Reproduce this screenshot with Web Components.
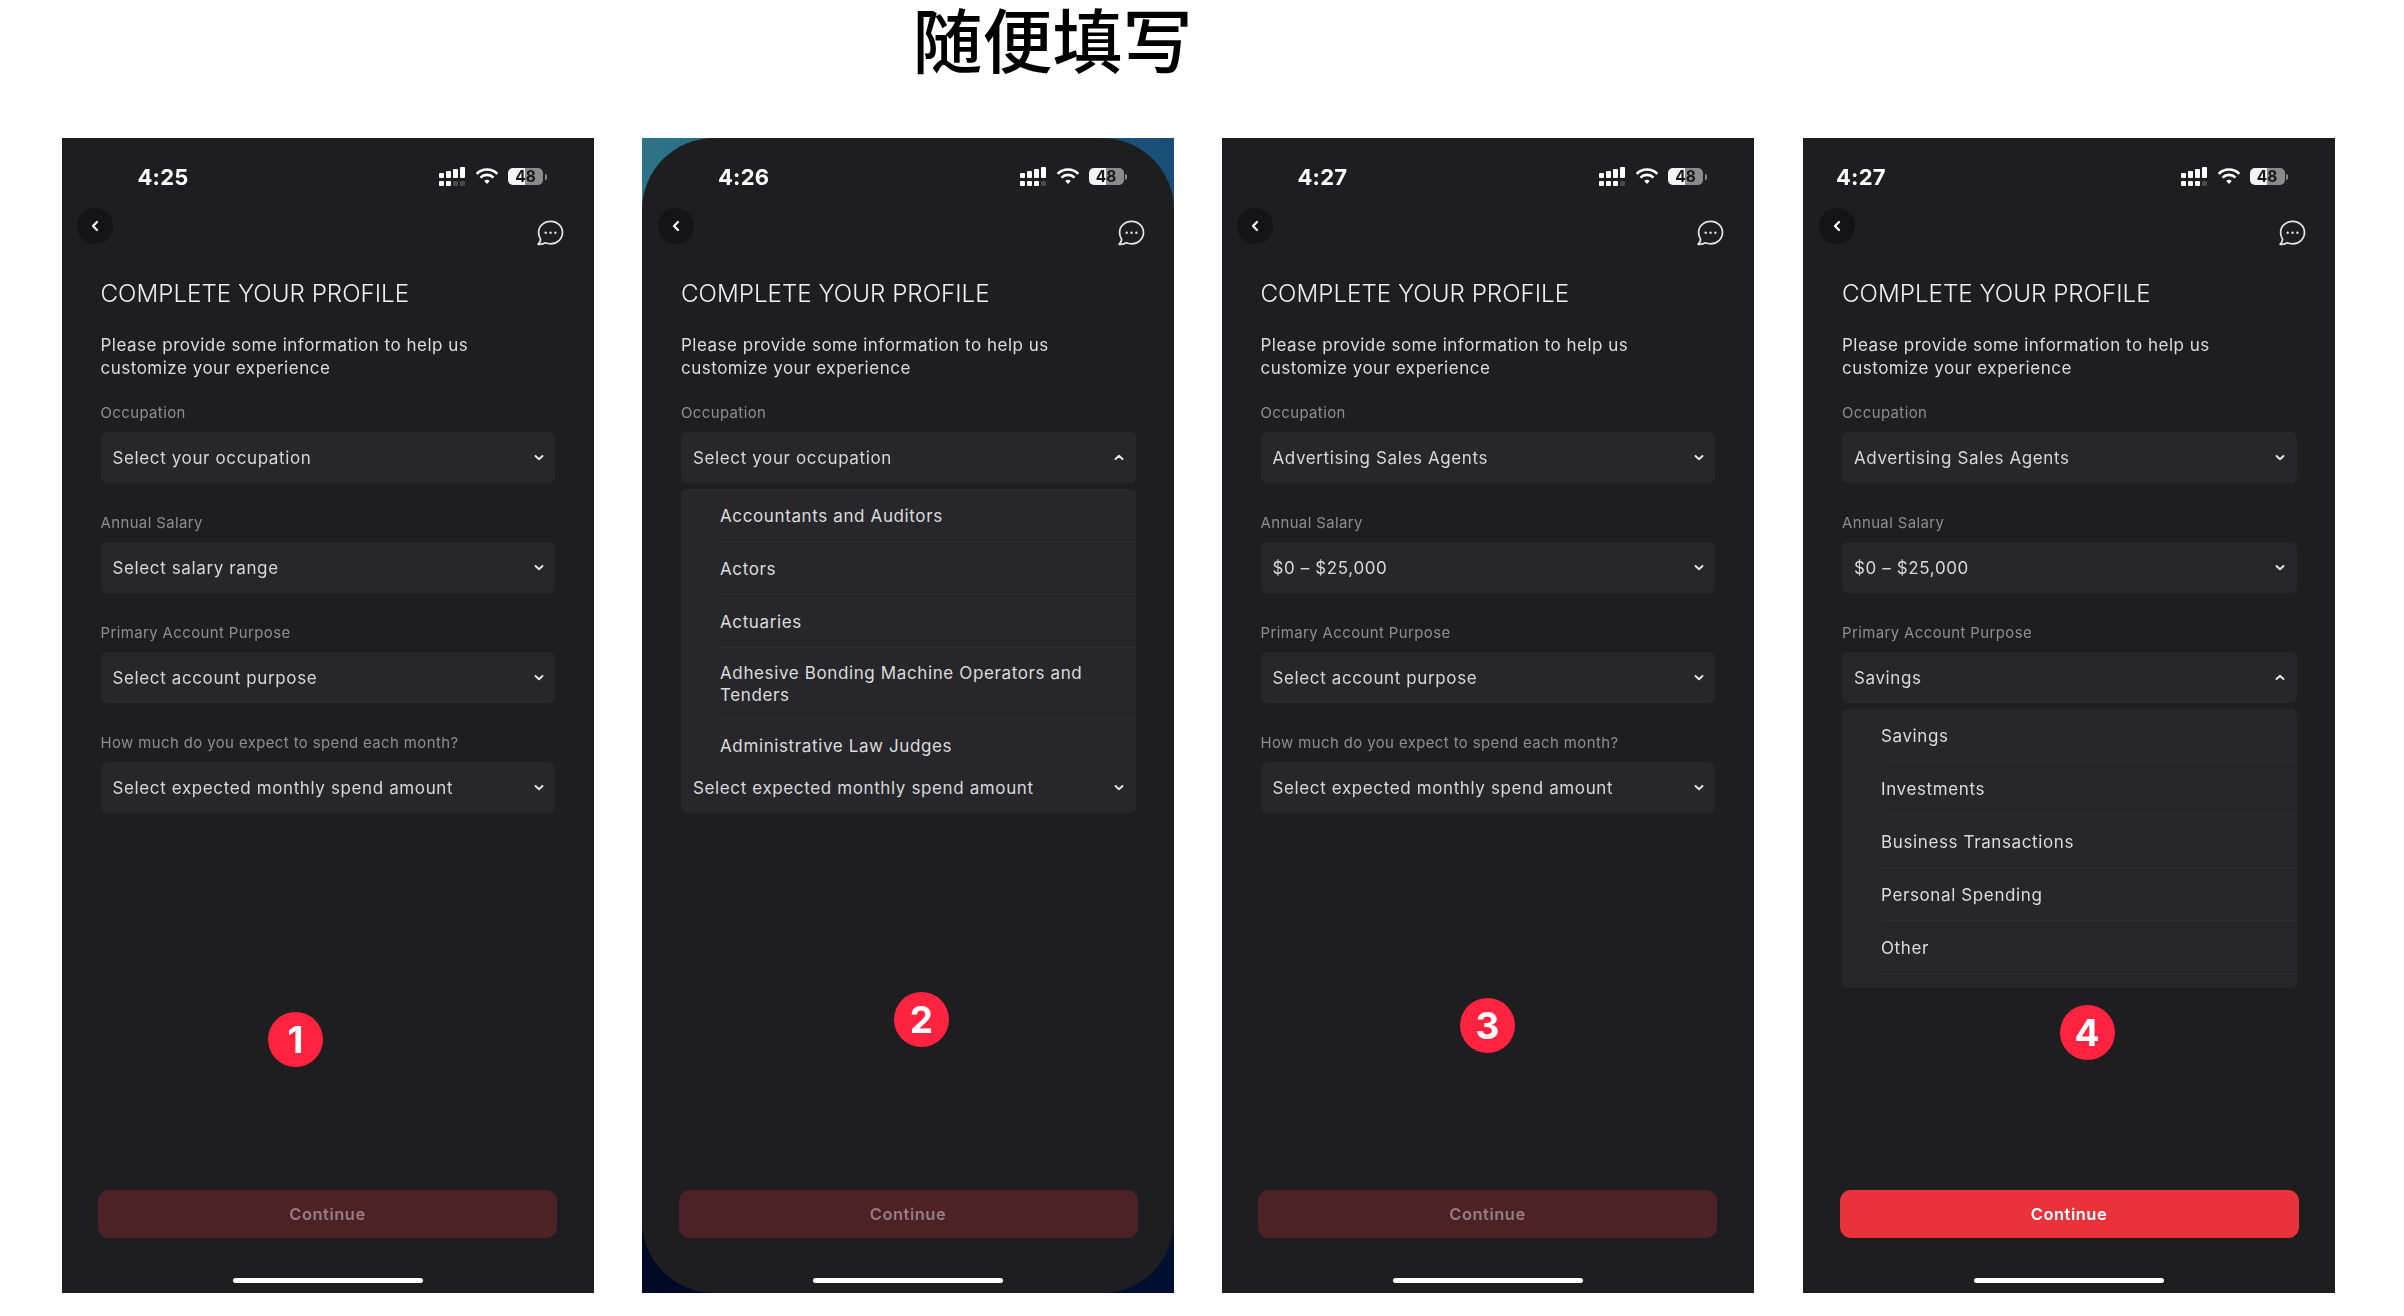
<!DOCTYPE html>
<html lang="en">
<head>
<meta charset="utf-8">
<title>Complete your profile</title>
<style>
  html, body { margin: 0; padding: 0; background: #fff; }
  body { font-family: Inter, "Noto Sans", sans-serif; }
</style>
</head>
<body>
<board-page>
  <app-phone time="4:25" signal="2">
    <select-field label="Occupation" value="Select your occupation"></select-field>
    <select-field label="Annual Salary" value="Select salary range"></select-field>
    <select-field label="Primary Account Purpose" value="Select account purpose"></select-field>
    <select-field label="How much do you expect to spend each month?" value="Select expected monthly spend amount"></select-field>
    <step-badge slot="over" style="left:206.5px;top:874px">1</step-badge>
  </app-phone>

  <app-phone time="4:26" signal="3" wallpaper>
    <select-field label="Occupation" value="Select your occupation" open>
      <drop-option>Accountants and Auditors</drop-option>
      <drop-option>Actors</drop-option>
      <drop-option>Actuaries</drop-option>
      <drop-option>Adhesive Bonding Machine Operators and Tenders</drop-option>
      <drop-option>Administrative Law Judges</drop-option>
    </select-field>
    <select-field label="Annual Salary" value="Select salary range" covered></select-field>
    <select-field label="Primary Account Purpose" value="Select account purpose" covered></select-field>
    <select-field label="How much do you expect to spend each month?" value="Select expected monthly spend amount" front></select-field>
    <step-badge slot="over" style="left:252px;top:853.5px">2</step-badge>
  </app-phone>

  <app-phone time="4:27" signal="3" style="margin:0 1px 0 -1px">
    <select-field label="Occupation" value="Advertising Sales Agents"></select-field>
    <select-field label="Annual Salary" value="$0 – $25,000"></select-field>
    <select-field label="Primary Account Purpose" value="Select account purpose"></select-field>
    <select-field label="How much do you expect to spend each month?" value="Select expected monthly spend amount"></select-field>
    <step-badge slot="over" style="left:238.5px;top:860px">3</step-badge>
  </app-phone>

  <app-phone time="4:27" signal="3" time-left="33" ready>
    <select-field label="Occupation" value="Advertising Sales Agents"></select-field>
    <select-field label="Annual Salary" value="$0 – $25,000"></select-field>
    <select-field label="Primary Account Purpose" value="Savings" open>
      <drop-option>Savings</drop-option>
      <drop-option>Investments</drop-option>
      <drop-option>Business Transactions</drop-option>
      <drop-option>Personal Spending</drop-option>
      <drop-option>Other</drop-option>
    </select-field>
    <select-field label="How much do you expect to spend each month?" value="Select expected monthly spend amount" covered></select-field>
    <step-badge slot="over" style="left:256.5px;top:867px">4</step-badge>
  </app-phone>
</board-page>

<script>
class BoardPage extends HTMLElement {
  connectedCallback() {
    this.attachShadow({ mode: 'open' });
    this.shadowRoot.innerHTML = `
      <style>
        :host { display: block; width: 2404px; height: 1316px; overflow: hidden; background: #fff; }
        header { height: 138px; padding-left: 912.5px; box-sizing: border-box; }
        h1 {
          margin: 0;
          font: 500 70px/76px "Noto Sans CJK SC", sans-serif;
          color: #000;
        }
        .phones { display: flex; gap: 48.5px; padding-left: 61.5px; }
      </style>
      <header><h1>随便填写</h1></header>
      <div class="phones"><slot></slot></div>
    `;
  }
}

class StatusBar extends HTMLElement {
  connectedCallback() {
    const time = this.getAttribute('time');
    const lit = Number(this.getAttribute('signal') || 3);
    const left = this.getAttribute('time-left') || 76;
    const dots = [0, 7, 14, 21].map((x, i) =>
      `<rect x="${x}" y="14" width="5" height="5" rx="1" fill="${i < lit ? '#fff' : '#4a4a4c'}"/>`).join('');
    this.attachShadow({ mode: 'open' });
    this.shadowRoot.innerHTML = `
      <style>
        :host {
          display: flex;
          align-items: center;
          height: 22px;
          padding: 28px 0 20px ${left}px;
          position: relative;
          color: #fff;
        }
        .time { font: 700 22px/22px Inter, sans-serif; letter-spacing: 0.2px; }
        .icons { position: absolute; left: 377.5px; top: 29px; display: flex; align-items: center; gap: 9px; }
        svg { display: block; }
        .battery { display: flex; align-items: center; gap: 1.5px; }
        .cell {
          width: 35px;
          height: 17px;
          border-radius: 5px;
          background: linear-gradient(90deg, #f4f4f4 48%, #8a8a8a 48%);
          color: #161616;
          font: 700 15.5px/17px Inter, sans-serif;
          text-align: center;
        }
        .tip { width: 2px; height: 6px; border-radius: 0 2px 2px 0; background: #8a8a8a; }
      </style>
      <span class="time">${time}</span>
      <div class="icons">
        <svg width="24" height="19" viewBox="0 0 27 19" fill="#fff" preserveAspectRatio="none" style="width:27px">
          <rect x="0" y="6" width="5" height="5" rx="1"/>
          <rect x="7" y="4" width="5" height="7" rx="1"/>
          <rect x="14" y="2" width="5" height="9" rx="1"/>
          <rect x="21" y="0" width="5" height="11" rx="1"/>
          ${dots}
        </svg>
        <svg width="24" height="17" viewBox="0 0 23 17" fill="none" stroke="#fff" stroke-width="2.6">
          <path d="M1.2 5.8a14.6 14.6 0 0 1 20.6 0"/>
          <path d="M5 9.6a9.2 9.2 0 0 1 13 0"/>
          <path d="M8.8 13.1a3.9 3.9 0 0 1 5.4 0L11.5 16z" fill="#fff" stroke="none"/>
        </svg>
        <div class="battery"><div class="cell">48</div><div class="tip"></div></div>
      </div>
    `;
  }
}

class NavBar extends HTMLElement {
  connectedCallback() {
    this.attachShadow({ mode: 'open' });
    this.shadowRoot.innerHTML = `
      <style>
        :host {
          display: flex;
          justify-content: space-between;
          align-items: flex-end;
          height: 38px;
          padding: 0 29.5px 0 15.5px;
        }
        .back {
          width: 36px;
          height: 36px;
          align-self: flex-start;
          border-radius: 50%;
          background: #141416;
          display: flex;
          align-items: center;
          justify-content: center;
        }
        svg { display: block; }
      </style>
      <div class="back">
        <svg width="8" height="12" viewBox="0 0 8 12" fill="none" stroke="#fff" stroke-width="2.2" stroke-linecap="round" stroke-linejoin="round">
          <path d="M6 2 2 6l4 4"/>
        </svg>
      </div>
      <svg width="28" height="26" viewBox="0 0 26 24" fill="none" stroke="#e4e4e4" stroke-width="1.6" stroke-linejoin="round">
        <path d="M13.6 1.2C7.2 1.2 2.4 5.8 2.4 11.6c0 2.2.6 4.2 1.8 5.9.3 1.6-.5 3.2-2.2 5 2.9.3 5.1-.3 6.6-1.4 1.5.7 3.2 1 5 1 6 0 11-4.7 11-10.5S19.8 1.2 13.6 1.2z"/>
        <g fill="#e4e4e4" stroke="none"><circle cx="9" cy="11.8" r="1.1"/><circle cx="13.5" cy="11.8" r="1.1"/><circle cx="18" cy="11.8" r="1.1"/></g>
      </svg>
    `;
  }
}

class AppPhone extends HTMLElement {
  connectedCallback() {
    const time = this.getAttribute('time');
    const signal = this.getAttribute('signal');
    const timeLeft = this.getAttribute('time-left') || '';
    this.attachShadow({ mode: 'open' });
    this.shadowRoot.innerHTML = `
      <style>
        :host {
          display: block;
          width: 532px;
          height: 1155px;
          flex: none;
          background: #1e1e20;
          color: #fff;
          font-family: Inter, "Noto Sans", sans-serif;
        }
        :host([wallpaper]) {
          background:
            linear-gradient(90deg, #2f7387, #174e78) top / 100% 50% no-repeat,
            linear-gradient(90deg, #010824, #021030) bottom / 100% 50% no-repeat;
        }
        .screen {
          position: relative;
          height: 100%;
          background: #1e1e20;
          display: flex;
          flex-direction: column;
          filter: blur(0.35px);
        }
        :host([wallpaper]) .screen { border-radius: 72px; }
        h2 {
          margin: 33px 0 0 39px;
          font: 300 24.2px/30px Inter, sans-serif;
          color: #f0f0f0;
        }
        p {
          margin: 25px 0 24px 39px;
          width: 430px;
          font: 400 17px/22.5px Inter, sans-serif;
          letter-spacing: 0.5px;
          color: #dcdcdc;
        }
        .fields { display: flex; flex-direction: column; gap: 30px; padding: 0 38.5px 0 39px; }
        .bottom { margin-top: auto; display: flex; flex-direction: column; align-items: center; }
        .home { width: 190px; height: 5px; margin: 40px 0 10px; border-radius: 3px; background: #fff; }
      </style>
      <div class="screen">
        <status-bar time="${time}" signal="${signal}" ${timeLeft ? `time-left="${timeLeft}"` : ''}></status-bar>
        <nav-bar></nav-bar>
        <h2>COMPLETE YOUR PROFILE</h2>
        <p>Please provide some information to help us customize your experience</p>
        <div class="fields"><slot></slot></div>
        <div class="bottom">
          <continue-button ${this.hasAttribute('ready') ? 'ready' : ''}>Continue</continue-button>
          <div class="home"></div>
        </div>
        <slot name="over"></slot>
      </div>
    `;
  }
}

class SelectField extends HTMLElement {
  connectedCallback() {
    const isOpen = this.hasAttribute('open');
    this.attachShadow({ mode: 'open' });
    this.shadowRoot.innerHTML = `
      <style>
        :host { display: block; position: relative; }
        :host([covered]) { visibility: hidden; }
        :host([front]) label { visibility: hidden; }
        label {
          display: block;
          margin-bottom: 9px;
          font: 400 14.9px/20px Inter, sans-serif;
          letter-spacing: 0.42px;
          color: #8e8e90;
        }
        .box {
          display: flex;
          align-items: center;
          justify-content: space-between;
          height: 51px;
          padding: 0 11.5px 0 12px;
          border-radius: 6px;
          background: #27262b;
          color: #d8d8d8;
          font: 400 17px/22px Inter, sans-serif;
          letter-spacing: 0.62px;
        }
        :host([front]) .box { position: relative; z-index: 2; }
        svg { display: block; }
        .panel {
          position: absolute;
          z-index: 1;
          left: 0;
          right: 0;
          top: 86px;
          padding-bottom: 14px;
          border-radius: 6px;
          background: #27262b;
        }
      </style>
      <label>${this.getAttribute('label')}</label>
      <div class="box">
        <span>${this.getAttribute('value')}</span>
        <svg width="10" height="7" viewBox="0 0 10 7" fill="none" stroke="#e8e8e8" stroke-width="1.9" stroke-linecap="round" stroke-linejoin="round">
          <path d="${isOpen ? 'M1.5 5 5 1.8 8.5 5' : 'M1.5 2 5 5.2 8.5 2'}"/>
        </svg>
      </div>
      ${isOpen ? '<div class="panel"><slot></slot></div>' : ''}
    `;
  }
}

class DropOption extends HTMLElement {
  connectedCallback() {
    this.attachShadow({ mode: 'open' });
    this.shadowRoot.innerHTML = `
      <style>
        :host {
          display: flex;
          align-items: center;
          box-sizing: border-box;
          min-height: 53px;
          margin-left: 39px;
          padding: 14px 20px 12px 0;
          border-bottom: 1px solid #2e2d32;
          font: 400 17px/22px Inter, sans-serif;
          letter-spacing: 0.62px;
          color: #dcdcdc;
        }
      </style>
      <slot></slot>
    `;
  }
}

class ContinueButton extends HTMLElement {
  connectedCallback() {
    this.attachShadow({ mode: 'open' });
    this.shadowRoot.innerHTML = `
      <style>
        :host {
          display: flex;
          align-items: center;
          justify-content: center;
          width: 459px;
          height: 48px;
          border-radius: 11px;
          background: #4d2226;
          color: #9a7c7e;
          font: 600 16.5px/20px Inter, sans-serif;
          letter-spacing: 0.5px;
        }
        :host([ready]) { background: #e9323a; color: #fff; }
      </style>
      <slot></slot>
    `;
  }
}

class StepBadge extends HTMLElement {
  connectedCallback() {
    this.attachShadow({ mode: 'open' });
    this.shadowRoot.innerHTML = `
      <style>
        :host {
          position: absolute;
          width: 55px;
          height: 55px;
          border-radius: 50%;
          background: #ff2340;
          color: #fff;
          display: flex;
          align-items: center;
          justify-content: center;
          font: 700 37px/1 Inter, sans-serif;
        }
      </style>
      <slot></slot>
    `;
  }
}

customElements.define('board-page', BoardPage);
customElements.define('status-bar', StatusBar);
customElements.define('nav-bar', NavBar);
customElements.define('app-phone', AppPhone);
customElements.define('select-field', SelectField);
customElements.define('drop-option', DropOption);
customElements.define('continue-button', ContinueButton);
customElements.define('step-badge', StepBadge);
</script>
</body>
</html>
